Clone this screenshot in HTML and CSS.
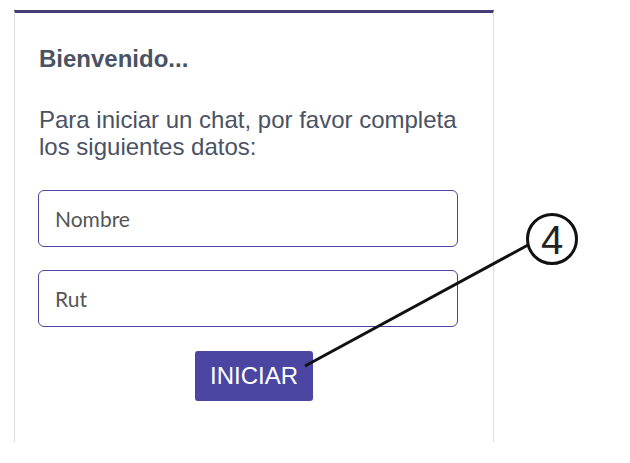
FILE: index.html
```html
<!DOCTYPE html>
<html lang="es">
  <head>
    <meta charset="UTF-8">
    <title>Chat</title>
    <link rel="stylesheet" href="styles.css">
  </head>
  <body>
    <div class="card">
      <h2 class="hi">Bienvenido...</h2>
      <p class="msg">Para iniciar un chat, por favor completa los siguientes datos:</p>
      <form class="f">
        <input class="i" placeholder="Nombre">
        <input class="i" placeholder="Rut">
        <div class="go"><button type="button" class="b">INICIAR</button></div>
      </form>
    </div>
    <svg class="note" width="630" height="463" viewBox="0 0 630 463">
      <line x1="305" y1="366" x2="528" y2="245" stroke="#111" stroke-width="3"/>
      <circle cx="552" cy="239" r="24.5" fill="#fff" stroke="#111" stroke-width="3"/>
      <text x="552" y="254" text-anchor="middle" font-family="Liberation Sans, Arial, sans-serif" font-size="40" fill="#222">4</text>
    </svg>
  </body>
</html>
```

FILE: styles.css
```css
body {margin: 0; background: #fff; font-family: 'Liberation Sans', Arial, sans-serif;
  color: #4a5263; position: relative;}
.card {width: 430px; height: 429px; margin: 10px 0 0 14px; padding: 0 24px;
  border-top: 3px solid #443c75; border-left: 1px solid #ddd;
  border-right: 1px solid #ddd;}
.hi {font-size: 24px; font-weight: 700; line-height: 27px; margin: 32px 0 0;}
.msg {font-size: 24px; line-height: 27px; margin: 34px 0 0;}
.f {display: flex; flex-flow: column; margin-top: 30px;}
.i {font-family: Lato, sans-serif; font-size: 21px; color: #555;
  width: 420px; height: 57px; margin: 0 0 23px -1px; padding: 0 16px;
  box-sizing: border-box; border: 1px solid #4a45a0; border-radius: 6px;
  outline: 0;}
.i::placeholder {color: #555;}
.i + .i {margin-bottom: 24px;}
.go {text-align: center;}
.b {font-family: inherit; font-size: 24px; color: #fff; background: #4a46a1;
  height: 50px; padding: 0 15px; border: 0; border-radius: 3px;}
.note {position: absolute; left: 0; top: 0; pointer-events: none;}
```
